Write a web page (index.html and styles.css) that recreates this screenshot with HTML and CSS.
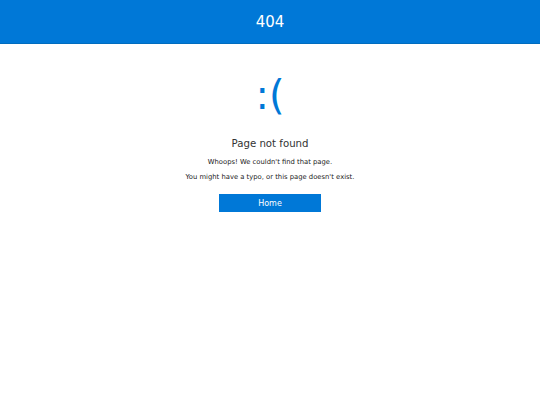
FILE: index.html
```html
<!DOCTYPE html>
<html>
<head>
<meta charset="utf-8">
<link rel="stylesheet" href="styles.css">
</head>
<body>
<header class="topbar"><span class="code">404</span></header>
<main class="content">
  <div class="face">:(</div>
  <h1 class="title">Page not found</h1>
  <p class="line">Whoops! We couldn't find that page.</p>
  <p class="line">You might have a typo, or this page doesn't exist.</p>
  <a class="btn" href="#">Home</a>
</main>
</body>
</html>
```
FILE: styles.css
```css
html, body { margin: 0; padding: 0; background: #fff; }
body { font-family: "DejaVu Sans", Verdana, sans-serif; color: #333; }
.topbar {
  height: 43px;
  background: #0078d7;
  border-bottom: 1px solid #006cbe;
  display: flex;
  align-items: center;
  justify-content: center;
}
.code { color: #fff; font-size: 15px; }
.content { display: flex; flex-direction: column; align-items: center; }
.face { color: #0078d7; font-size: 40px; margin-top: 27px; line-height: 48px; }
.title { font-size: 10.2px; font-weight: normal; margin: 17px 0 0; line-height: 16px; color: #333; }
.line { font-size: 6.8px; margin: 5px 0 0; line-height: 10px; color: #222; }
.btn {
  margin-top: 12px;
  width: 102px; height: 18px;
  background: #0078d7; color: #fff;
  font-size: 8px; text-decoration: none;
  display: flex; align-items: center; justify-content: center;
}
```
